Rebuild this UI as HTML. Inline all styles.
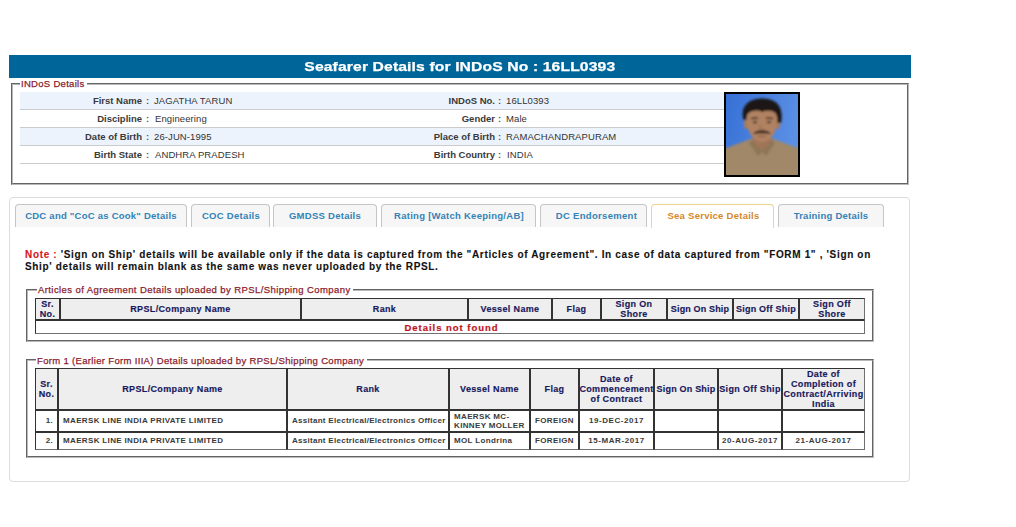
<!DOCTYPE html>
<html>
<head>
<meta charset="utf-8">
<style>
html,body{margin:0;padding:0;background:#fff;width:1016px;height:527px;overflow:hidden;position:relative;font-family:"Liberation Sans",sans-serif;}
.a{position:absolute;}
.bar{left:9px;top:55px;width:902px;height:23px;background:#006699;}
.title{left:9px;top:55px;width:902px;height:23px;line-height:23px;text-align:center;color:#fff;font-weight:bold;font-size:13px;letter-spacing:0.1px;white-space:nowrap;}
.fs{box-sizing:border-box;border:2px groove #b8b8b8;}
.legend{background:#fff;color:#8c1d2e;font-size:9.5px;white-space:nowrap;padding:0 2px 0 1px;line-height:12px;letter-spacing:0.3px;-webkit-text-stroke:0.25px #8a1c2c;}
.row{left:20px;width:704px;height:17px;border-bottom:1px solid #cbcbcb;}
.row.alt{background:#ecf3fc;}
.lbl{font-weight:bold;color:#3a3a3a;font-size:9.5px;letter-spacing:0px;white-space:nowrap;text-align:right;line-height:17px;}
.val{color:#333;font-size:9.5px;letter-spacing:0.1px;white-space:nowrap;line-height:17px;}
.col{font-weight:bold;color:#555;font-size:9.5px;line-height:17px;}
.panel{left:9px;top:197px;width:901px;height:285px;box-sizing:border-box;border:1px solid #dcdcdc;border-radius:4px;}
.tab{top:204px;height:23px;box-sizing:border-box;border:1px solid #c5c5c5;border-bottom:none;border-radius:4px 4px 0 0;background:#f6f6f6;color:#3383b6;font-weight:bold;font-size:9.5px;letter-spacing:0.15px;text-align:center;line-height:22px;white-space:nowrap;}
.tab.act{height:24px;background:#fff;border-color:#ecd58c;color:#d4882a;line-height:22px;}
.note{left:25px;font-weight:bold;font-size:10px;color:#111;white-space:nowrap;line-height:12px;letter-spacing:0.62px;-webkit-text-stroke:0.1px #111;}
.c{position:absolute;box-sizing:border-box;border:1px solid #333;display:flex;align-items:center;justify-content:center;text-align:center;}
.h{background:#eeeeee;color:#18185c;-webkit-text-stroke:0.15px #18185c;font-weight:bold;font-size:9px;line-height:10px;letter-spacing:0.35px;}
.d{background:#fff;color:#3a3a3a;font-weight:bold;font-size:8px;line-height:9px;letter-spacing:0.35px;padding-bottom:2px;}
</style>
</head>
<body>
<div class="a bar"></div>
<div class="a title"><span style="display:inline-block;transform:scaleX(1.207);-webkit-text-stroke:0.25px #fff;transform-origin:50% 50%">Seafarer Details for INDoS No : 16LL0393</span></div>

<!-- INDoS fieldset -->
<div class="a fs" style="left:11px;top:83px;width:898px;height:102px;"></div>
<div class="a legend" style="left:20px;top:78px;">INDoS Details</div>

<div class="a row alt" style="top:92px;"></div>
<div class="a row" style="top:110px;"></div>
<div class="a row alt" style="top:128px;"></div>
<div class="a row" style="top:146px;"></div>

<div class="a lbl" style="right:874px;top:92px;">First Name</div>
<div class="a lbl" style="right:874px;top:110px;">Discipline</div>
<div class="a lbl" style="right:874px;top:128px;">Date of Birth</div>
<div class="a lbl" style="right:874px;top:146px;">Birth State</div>
<div class="a col" style="left:146px;top:92px;">:</div>
<div class="a col" style="left:146px;top:110px;">:</div>
<div class="a col" style="left:146px;top:128px;">:</div>
<div class="a col" style="left:146px;top:146px;">:</div>
<div class="a val" style="left:154px;top:92px;">JAGATHA TARUN</div>
<div class="a val" style="left:155px;top:110px;">Engineering</div>
<div class="a val" style="left:154px;top:128px;">26-JUN-1995</div>
<div class="a val" style="left:155px;top:146px;">ANDHRA PRADESH</div>

<div class="a lbl" style="right:521px;top:92px;">INDoS No.</div>
<div class="a lbl" style="right:521px;top:110px;">Gender</div>
<div class="a lbl" style="right:521px;top:128px;">Place of Birth</div>
<div class="a lbl" style="right:521px;top:146px;">Birth Country</div>
<div class="a col" style="left:498px;top:92px;">:</div>
<div class="a col" style="left:498px;top:110px;">:</div>
<div class="a col" style="left:498px;top:128px;">:</div>
<div class="a col" style="left:498px;top:146px;">:</div>
<div class="a val" style="left:506px;top:92px;">16LL0393</div>
<div class="a val" style="left:506px;top:110px;">Male</div>
<div class="a val" style="left:506px;top:128px;">RAMACHANDRAPURAM</div>
<div class="a val" style="left:507px;top:146px;">INDIA</div>

<!-- photo -->
<div class="a" style="left:724px;top:92px;width:76px;height:85px;background:#000;">
<svg class="a" style="left:2px;top:2px" width="72" height="81" viewBox="0 0 72 81">
<defs><linearGradient id="bg" x1="0" y1="0" x2="1" y2="0.3"><stop offset="0" stop-color="#3670d6"/><stop offset="1" stop-color="#5b8fe5"/></linearGradient>
<filter id="bl" x="-10%" y="-10%" width="120%" height="120%"><feGaussianBlur stdDeviation="0.8"/></filter></defs>
<rect width="72" height="81" fill="url(#bg)"/>
<g filter="url(#bl)">
<path d="M-2 55 C6 52 16 48 24 45 L48 45 C56 48 66 52 74 55 L74 83 L-2 83 Z" fill="#a08867"/>
<path d="M26 46 L36 56 L46 46 L49 49 L40 62 L36 58 L32 62 L23 49 Z" fill="#8e7656"/>
<path d="M27 40 L45 40 L46 47 L36 56 L26 47 Z" fill="#a07458"/>
<ellipse cx="20.5" cy="30" rx="2.6" ry="5" fill="#a97a5c"/>
<ellipse cx="51.5" cy="30" rx="2.6" ry="5" fill="#a97a5c"/>
<path d="M20.5 20 C20.5 36 25 47 36 48 C47 47 51.5 36 51.5 20 C51.5 9 20.5 9 20.5 20 Z" fill="#b08262"/>
<path d="M17.5 26 C14 14 21 4.5 36 4.5 C51 4.5 58 13 55 29 L51.5 29 C51.5 22 50 19 48 18 C42 16 39 17 36 18 C33 16 29 16 24 18 C22 19 20.5 21 20.5 26 Z" fill="#1c1612"/>
<path d="M25 24.5 L32 24 M40 24 L47 24.5" stroke="#3a2418" stroke-width="1.4"/>
<ellipse cx="29" cy="28.2" rx="2.4" ry="1" fill="#3a2a20"/>
<ellipse cx="43" cy="28.2" rx="2.4" ry="1" fill="#3a2a20"/>
<path d="M27 40 C30 36.5 34 36 36 37 C38 36 42 36.5 45 40 C41 39 38 39 36 39.5 C34 39 31 39 27 40 Z" fill="#2a1a12"/>
<path d="M34 31 L34.5 35.5 L38 35.5" stroke="#8d6246" stroke-width="0.9" fill="none"/>
<path d="M32 42.5 L40 42.5" stroke="#7a4e3a" stroke-width="0.9"/>
</g>
</svg>
</div>

<!-- tabs panel -->
<div class="a panel"></div>
<div class="a tab" style="left:15px;width:172px;letter-spacing:0.24px">CDC and "CoC as Cook" Details</div>
<div class="a tab" style="left:191px;width:79px;letter-spacing:0.3px;padding-left:1px">COC Details</div>
<div class="a tab" style="left:273px;width:104px;letter-spacing:0.27px">GMDSS Details</div>
<div class="a tab" style="left:381px;width:155px;letter-spacing:0.27px;padding-left:1px">Rating [Watch Keeping/AB]</div>
<div class="a tab" style="left:540px;width:107px;letter-spacing:0.3px;padding-left:6px">DC Endorsement</div>
<div class="a tab act" style="left:651px;width:123px;letter-spacing:0.26px;padding-left:2px">Sea Service Details</div>
<div class="a tab" style="left:778px;width:106px;letter-spacing:0.25px">Training Details</div>

<div class="a note" style="top:249px;letter-spacing:0.66px"><span style="color:#d8141e;-webkit-text-stroke-color:#d8141e">Note :</span> 'Sign on Ship' details will be available only if the data is captured from the "Articles of Agreement". In case of data captured from "FORM 1" , 'Sign on</div>
<div class="a note" style="top:261px;letter-spacing:0.65px">Ship' details will remain blank as the same was never uploaded by the RPSL.</div>

<!-- Articles fieldset -->
<div class="a fs" style="left:26px;top:289px;width:848px;height:53px;"></div>
<div class="a legend" style="left:37px;top:284px;letter-spacing:0.41px">Articles of Agreement Details uploaded by RPSL/Shipping Company</div>

<!-- Form1 fieldset -->
<div class="a fs" style="left:26px;top:359px;width:848px;height:99px;"></div>
<div class="a legend" style="left:36px;top:355px;letter-spacing:0.33px;padding-right:3px">Form 1 (Earlier Form IIIA) Details uploaded by RPSL/Shipping Company</div>

<!--TABLES-->
<!-- articles table -->
<div class="c h" style="left:35px;top:298px;width:25px;height:22px;">Sr.<br>No.</div>
<div class="c h" style="left:60px;top:298px;width:241px;height:22px;">RPSL/Company Name</div>
<div class="c h" style="left:301px;top:298px;width:167px;height:22px;">Rank</div>
<div class="c h" style="left:468px;top:298px;width:84px;height:22px;">Vessel Name</div>
<div class="c h" style="left:552px;top:298px;width:49px;height:22px;">Flag</div>
<div class="c h" style="left:601px;top:298px;width:66px;height:22px;">Sign On<br>Shore</div>
<div class="c h" style="left:667px;top:298px;width:66px;height:22px;letter-spacing:0.15px">Sign On Ship</div>
<div class="c h" style="left:733px;top:298px;width:66px;height:22px;letter-spacing:0.25px">Sign Off Ship</div>
<div class="c h" style="left:799px;top:298px;width:66px;height:22px;border-right-color:#707070;">Sign Off<br>Shore</div>
<div class="c d" style="left:35px;top:320px;width:830px;height:14px;border-right-color:#707070;border-bottom-color:#707070;color:#c0141e;-webkit-text-stroke:0.2px #c0141e;font-size:9.5px;line-height:12px;letter-spacing:0.97px;padding-bottom:0;padding-top:2px;padding-left:3px;">Details not found</div>
<!-- form1 table -->
<div class="c h" style="left:35px;top:368px;width:23px;height:42px;">Sr.<br>No.</div>
<div class="c h" style="left:58px;top:368px;width:229px;height:42px;">RPSL/Company Name</div>
<div class="c h" style="left:287px;top:368px;width:162px;height:42px;">Rank</div>
<div class="c h" style="left:449px;top:368px;width:81px;height:42px;">Vessel Name</div>
<div class="c h" style="left:530px;top:368px;width:49px;height:42px;">Flag</div>
<div class="c h" style="left:579px;top:368px;width:75px;height:42px;">Date of<br>Commencement<br>of Contract</div>
<div class="c h" style="left:654px;top:368px;width:64px;height:42px;letter-spacing:0.2px">Sign On Ship</div>
<div class="c h" style="left:718px;top:368px;width:64px;height:42px;">Sign Off Ship</div>
<div class="c h" style="left:782px;top:368px;width:83px;height:42px;border-right-color:#707070;">Date of<br>Completion of<br>Contract/Arriving<br>India</div>
<div class="c d" style="left:35px;top:410px;width:23px;height:22px;justify-content:flex-end;padding-right:4px;">1.</div>
<div class="c d" style="left:58px;top:410px;width:229px;height:22px;justify-content:flex-start;text-align:left;padding-left:4px;">MAERSK LINE INDIA PRIVATE LIMITED</div>
<div class="c d" style="left:287px;top:410px;width:162px;height:22px;justify-content:flex-start;text-align:left;padding-left:4px;letter-spacing:0.28px;">Assitant Electrical/Electronics Officer</div>
<div class="c d" style="left:449px;top:410px;width:81px;height:22px;justify-content:flex-start;text-align:left;padding-left:4px;padding-bottom:0;">MAERSK MC-<br>KINNEY MOLLER</div>
<div class="c d" style="left:530px;top:410px;width:49px;height:22px;">FOREIGN</div>
<div class="c d" style="left:579px;top:410px;width:75px;height:22px;letter-spacing:0.55px;">19-DEC-2017</div>
<div class="c d" style="left:654px;top:410px;width:64px;height:22px;"></div>
<div class="c d" style="left:718px;top:410px;width:64px;height:22px;"></div>
<div class="c d" style="left:782px;top:410px;width:83px;height:22px;border-right-color:#707070;"></div>
<div class="c d" style="left:35px;top:432px;width:23px;height:18px;border-bottom-color:#707070;justify-content:flex-end;padding-right:4px;">2.</div>
<div class="c d" style="left:58px;top:432px;width:229px;height:18px;border-bottom-color:#707070;justify-content:flex-start;text-align:left;padding-left:4px;">MAERSK LINE INDIA PRIVATE LIMITED</div>
<div class="c d" style="left:287px;top:432px;width:162px;height:18px;border-bottom-color:#707070;justify-content:flex-start;text-align:left;padding-left:4px;letter-spacing:0.28px;">Assitant Electrical/Electronics Officer</div>
<div class="c d" style="left:449px;top:432px;width:81px;height:18px;border-bottom-color:#707070;justify-content:flex-start;text-align:left;padding-left:4px;">MOL Londrina</div>
<div class="c d" style="left:530px;top:432px;width:49px;height:18px;border-bottom-color:#707070;">FOREIGN</div>
<div class="c d" style="left:579px;top:432px;width:75px;height:18px;border-bottom-color:#707070;letter-spacing:0.55px;">15-MAR-2017</div>
<div class="c d" style="left:654px;top:432px;width:64px;height:18px;border-bottom-color:#707070;"></div>
<div class="c d" style="left:718px;top:432px;width:64px;height:18px;border-bottom-color:#707070;letter-spacing:0.55px;">20-AUG-2017</div>
<div class="c d" style="left:782px;top:432px;width:83px;height:18px;border-right-color:#707070;border-bottom-color:#707070;letter-spacing:0.55px;">21-AUG-2017</div>
<!--/TABLES-->
</body>
</html>
